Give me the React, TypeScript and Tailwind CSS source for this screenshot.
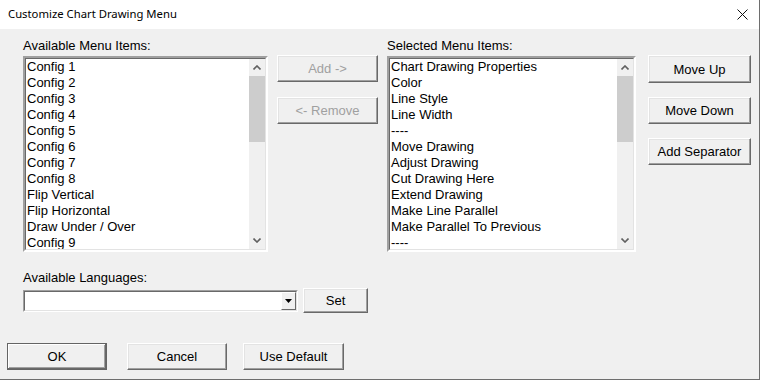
const leftItems = [
  "Config 1",
  "Config 2",
  "Config 3",
  "Config 4",
  "Config 5",
  "Config 6",
  "Config 7",
  "Config 8",
  "Flip Vertical",
  "Flip Horizontal",
  "Draw Under / Over",
  "Config 9",
];

const rightItems = [
  "Chart Drawing Properties",
  "Color",
  "Line Style",
  "Line Width",
  "----",
  "Move Drawing",
  "Adjust Drawing",
  "Cut Drawing Here",
  "Extend Drawing",
  "Make Line Parallel",
  "Make Parallel To Previous",
  "----",
];

const btn =
  "flex items-center justify-center bg-[#f0f0f0] border border-t-white border-l-white border-r-[#696969] border-b-[#696969] shadow-[inset_-1px_-1px_0_#a0a0a0,inset_1px_1px_0_#e3e3e3] text-[13px] leading-none";

function Button({ label, className, disabled, isDefault }: { label: string; className: string; disabled?: boolean; isDefault?: boolean }) {
  const frame = isDefault
    ? "flex items-center justify-center bg-[#f0f0f0] border border-[#646464] shadow-[inset_-1px_-1px_0_#696969,inset_1px_1px_0_#fff,inset_-2px_-2px_0_#a0a0a0] text-[13px] leading-none"
    : btn;
  return (
    <div className={`${frame} ${className} ${disabled ? "text-[#a0a0a0]" : "text-black"}`}>
      {label}
    </div>
  );
}

function Chevron({ up }: { up?: boolean }) {
  return (
    <svg width="8" height="5" viewBox="0 0 8 5" className="block">
      <path d={up ? "M0.5 4.5 L4 1 L7.5 4.5" : "M0.5 0.5 L4 4 L7.5 0.5"} fill="none" stroke="#606060" strokeWidth="1.6" />
    </svg>
  );
}

function ListBox({ items, className }: { items: string[]; className: string }) {
  return (
    <div className={`flex h-[196px] border-2 border-t-[#a0a0a0] border-l-[#a0a0a0] border-r-white border-b-white bg-white ${className}`}>
      <div className="flex flex-1 border border-t-[#696969] border-l-[#696969] border-r-[#e3e3e3] border-b-[#e3e3e3]">
        <div className="flex-1 overflow-hidden pl-[1px]">
          {items.map((it, i) => (
            <div key={i} className="h-[16px] pb-[1px] text-[13px] leading-[15px] text-black whitespace-nowrap">
              {it}
            </div>
          ))}
        </div>
        <div className="flex w-[16px] flex-col bg-[#f0f0f0]">
          <div className="flex h-[17px] items-center justify-center">
            <Chevron up />
          </div>
          <div className="h-[66px] bg-[#cdcdcd]" />
          <div className="flex-1" />
          <div className="flex h-[17px] items-center justify-center">
            <Chevron />
          </div>
        </div>
      </div>
    </div>
  );
}

export default function App() {
  return (
    <div
      className="flex h-[380px] w-[760px] flex-col overflow-hidden border-r border-b border-[#6e6e6e] bg-[#f0f0f0]"
      style={{ fontFamily: '"Liberation Sans", Arial, sans-serif' }}
    >
      <div className="flex h-[29px] shrink-0 items-center justify-between bg-white pl-[8px] pr-[10px]">
        <span className="text-[11.3px] text-black" style={{ fontFamily: '"Noto Sans", "Open Sans", sans-serif' }}>
          Customize Chart Drawing Menu
        </span>
        <svg width="11" height="11" viewBox="0 0 11 11" className="mr-[1px]">
          <path d="M0.5 0.5 L10.5 10.5 M10.5 0.5 L0.5 10.5" stroke="#111" strokeWidth="1" />
        </svg>
      </div>

      <div className="flex pl-[23px] pt-[9px]">
        <div className="flex w-[245px] flex-col">
          <div className="h-[18px] text-[13px] leading-[16px] text-black">Available Menu Items:</div>
          <ListBox items={leftItems} className="w-[245px]" />
        </div>
        <div className="ml-[9px] flex w-[101px] flex-col pt-[17px]">
          <Button label="Add ->" className="h-[27px]" disabled />
          <Button label="<- Remove" className="mt-[15px] h-[27px]" disabled />
        </div>
        <div className="ml-[9px] flex w-[249px] flex-col">
          <div className="h-[18px] text-[13px] leading-[16px] text-black">Selected Menu Items:</div>
          <ListBox items={rightItems} className="w-[249px]" />
        </div>
        <div className="ml-[12px] flex w-[103px] flex-col pt-[17px]">
          <Button label="Move Up" className="h-[28px]" />
          <Button label="Move Down" className="mt-[14px] h-[27px]" />
          <Button label="Add Separator" className="mt-[14px] h-[27px]" />
        </div>
      </div>

      <div className="mt-[18px] pl-[23px]">
        <div className="h-[18px] text-[13px] leading-[16px] text-black">Available Languages:</div>
        <div className="flex items-center">
          <div className="flex h-[22px] w-[275px] border border-t-[#a0a0a0] border-l-[#a0a0a0] border-r-white border-b-white bg-white">
            <div className="flex flex-1 justify-end border border-t-[#696969] border-l-[#696969] border-r-[#e3e3e3] border-b-[#e3e3e3]">
              <div className="flex w-[15px] items-center justify-center bg-[#f0f0f0] border border-t-white border-l-white border-r-[#696969] border-b-[#696969]">
                <svg width="7" height="4" viewBox="0 0 7 4">
                  <path d="M0 0 L7 0 L3.5 4 Z" fill="#000" />
                </svg>
              </div>
            </div>
          </div>
          <Button label="Set" className="ml-[5px] h-[25px] w-[65px]" />
        </div>
      </div>

      <div className="mt-[30px] flex pl-[7px]">
        <Button label="OK" className="h-[27px] w-[100px]" isDefault />
        <Button label="Cancel" className="ml-[20px] h-[27px] w-[100px]" />
        <Button label="Use Default" className="ml-[16px] h-[27px] w-[101px]" />
      </div>
    </div>
  );
}
